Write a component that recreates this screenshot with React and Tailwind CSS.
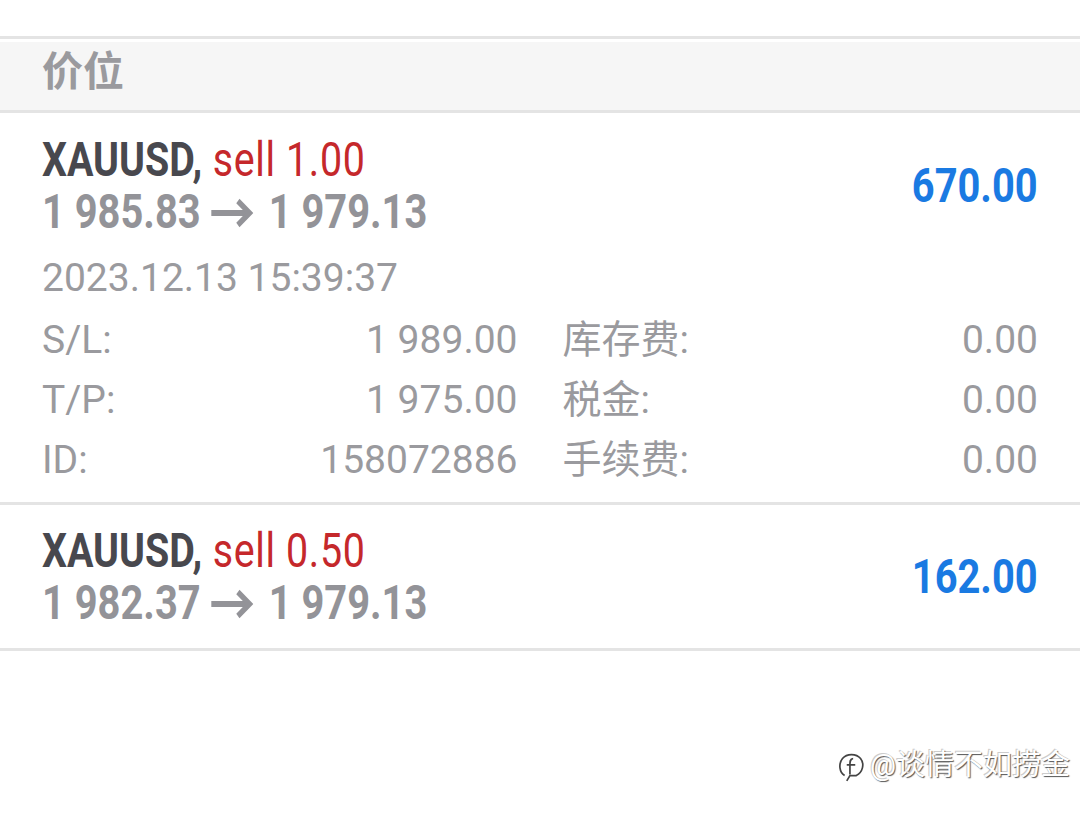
import React from "react";

const font = { fontFamily: 'Roboto, "Noto Sans CJK SC", sans-serif' };

function Arrow() {
  return (
    <svg
      className="inline-block align-middle ml-[12px] mr-[18px] -mt-[4px]"
      width="52"
      height="30"
      viewBox="0 0 52 30"
      fill="none"
      stroke="#939398"
      strokeWidth="6"
      strokeLinecap="butt"
      strokeLinejoin="miter"
    >
      <path d="M1 15 H47" />
      <path d="M33 3 L47 15 L33 27" />
    </svg>
  );
}

function Position({ sell, from, to, profit, details }) {
  return (
    <div className="px-[42px]">
      <div className="flex items-center justify-between">
        <div className="flex flex-col">
          <div className="h-[52px] leading-[52px] text-[48px] whitespace-nowrap">
            <span className="inline-block origin-left scale-x-[0.82]">
              <span className="font-bold text-[#48484e]">XAUUSD,</span>
              <span className="text-[#c5282b] tracking-[0.8px]"> sell {sell}</span>
            </span>
          </div>
          <div className="h-[52px] leading-[52px] text-[48px] whitespace-nowrap font-bold text-[#939398]">
            <span className="inline-block origin-left scale-x-[0.83]">
              {from}
              <Arrow />
              {to}
            </span>
          </div>
        </div>
        <div className="text-[48px] leading-[52px] font-bold text-[#1a7ae2] whitespace-nowrap">
          <span className="inline-block origin-right scale-x-[0.83]">{profit}</span>
        </div>
      </div>
      {details}
    </div>
  );
}

function Row({ l1, v1, l2, v2 }) {
  return (
    <div className="grid grid-cols-2 gap-x-[45px] h-[60px] leading-[60px] text-[39px] text-[#9a9a9e]">
      <div className="flex justify-between">
        <span>{l1}</span>
        <span>{v1}</span>
      </div>
      <div className="flex justify-between">
        <span>{l2}</span>
        <span>{v2}</span>
      </div>
    </div>
  );
}

export default function App() {
  return (
    <div className="relative w-[1080px] h-[815px] bg-white overflow-hidden" style={font}>
      <div className="h-[36px]" />
      <div className="h-[3px] bg-[#e4e4e4]" />
      <div className="h-[3px]" />
      <div className="h-[68px] bg-[#f6f6f6] flex items-center px-[42px] pb-[7px]">
        <span className="text-[41px] font-bold text-[#9a9a9e]">价位</span>
      </div>
      <div className="h-[3px] bg-[#e4e4e4]" />
      <div className="pt-[21px] pb-[12px]">
        <Position
          sell="1.00"
          from="1 985.83"
          to="1 979.13"
          profit="670.00"
          details={
            <div>
              <div className="mt-[10px] h-[60px] leading-[60px] text-[39px] text-[#9a9a9e]">
                2023.12.13 15:39:37
              </div>
              <div className="mt-[2px]">
                <Row l1="S/L:" v1="1 989.00" l2="库存费:" v2="0.00" />
                <Row l1="T/P:" v1="1 975.00" l2="税金:" v2="0.00" />
                <Row l1="ID:" v1="158072886" l2="手续费:" v2="0.00" />
              </div>
            </div>
          }
        />
      </div>
      <div className="h-[3px] bg-[#e4e4e4]" />
      <div className="pt-[20px] pb-[19px]">
        <Position sell="0.50" from="1 982.37" to="1 979.13" profit="162.00" />
      </div>
      <div className="h-[3px] bg-[#e4e4e4]" />

      <div className="absolute left-[836px] top-[744px] flex items-center gap-[4px] text-[29px] text-white [text-shadow:1px_1px_1px_#555,-1px_-1px_0_#ccc]">
        <svg width="30" height="34" viewBox="0 0 28 32" fill="none" stroke="#444" strokeWidth="1.6">
          <path d="M8 25 C3 22 2 14 6 9 C10 4 19 4 23 9 C27 14 25 22 19 25 L13 25 L10 30" />
          <path d="M16 9 C13 9 13 12 13 15 L13 24 M10 15 L18 15" />
        </svg>
        <span>@谈情不如捞金</span>
      </div>
    </div>
  );
}
